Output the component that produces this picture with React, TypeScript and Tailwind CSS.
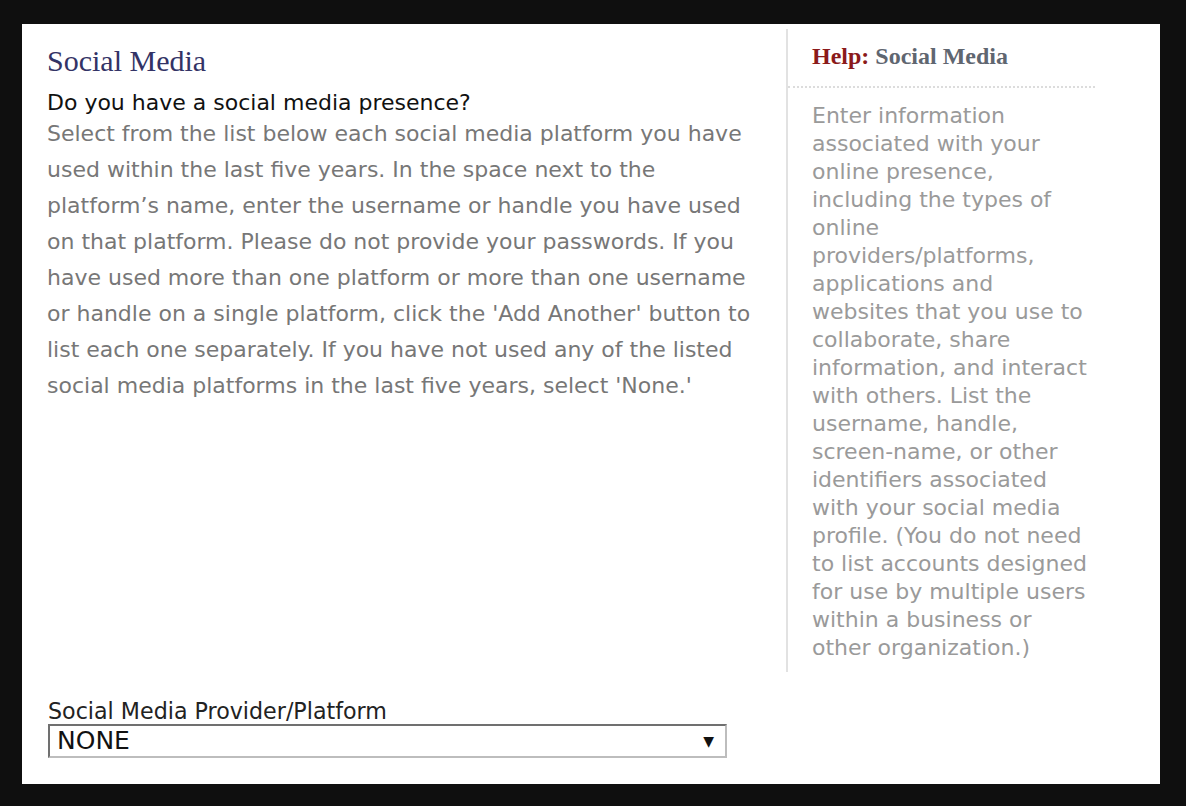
import React from 'react';

// Hilfetext rechts neben dem Formular
const HILFE =
  'Enter information associated with your online presence, including the types of online providers/platforms, applications and websites that you use to collaborate, share information, and interact with others. List the username, handle, screen-name, or other identifiers associated with your social media profile. (You do not need to list accounts designed for use by multiple users within a business or other organization.)';

export default function App() {
  return (
    <div className="min-h-screen bg-[#0f0f0f] pt-6 pl-[22px] pr-[26px] pb-[22px]">
      <div className="bg-white h-[760px] flex flex-col">
        <div className="flex">
          {/* Fragetext */}
          <div className="w-[764px] pl-[25px] pr-[24px] pt-5">
            <h2 className="font-['Liberation_Serif',serif] text-[30px] leading-[33px] text-[#333366]">
              Social Media
            </h2>
            <div className="font-['DejaVu_Sans',Verdana,sans-serif] text-[22px]">
              <p className="mt-[14px] leading-[24px] text-[#111]">Do you have a social media presence?</p>
              <p className="mt-[1px] leading-[36px] text-[#777]">
                Select from the list below each social media platform you have used within the last five years. In
                the space next to the platform’s name, enter the username or handle you have used on that platform.
                Please do not provide your passwords. If you have used more than one platform or more than one
                username or handle on a single platform, click the 'Add Another' button to list each one separately.
                If you have not used any of the listed social media platforms in the last five years, select 'None.'
              </p>
            </div>
          </div>

          {/* Hilfe */}
          <aside className="mt-[5px] w-[309px] border-l-2 border-[#e2e2e2] pb-[10px]">
            <h3 className="border-b-2 border-dotted border-[#dcdcdc] pl-[24px] pt-[14px] pb-[17px] font-['Liberation_Serif',serif] text-[24px] leading-[26px] font-bold">
              <span className="text-[#8b1a1a]">Help:</span> <span className="text-[#5f6670]">Social Media</span>
            </h3>
            <p className="pl-[24px] pr-[5px] pt-[14px] font-['DejaVu_Sans',Verdana,sans-serif] text-[22px] leading-[28px] text-[#9a9a9a]">
              {HILFE}
            </p>
          </aside>
        </div>

        {/* Auswahl */}
        <div className="mt-[26px] pl-[26px] font-['DejaVu_Sans',Verdana,sans-serif]">
          <label className="block text-[22.2px] leading-[26px] text-[#222]">Social Media Provider/Platform</label>
          <div className="w-[679px] h-[34px] flex items-center justify-between border-2 border-t-[#707070] border-l-[#707070] border-r-[#bdbdbd] border-b-[#bdbdbd] pl-[7px] pr-[11px]">
            <span className="text-[25px] leading-[30px] text-[#111]">NONE</span>
            <span className="text-[14px] text-[#111]">▼</span>
          </div>
        </div>
      </div>
    </div>
  );
}
